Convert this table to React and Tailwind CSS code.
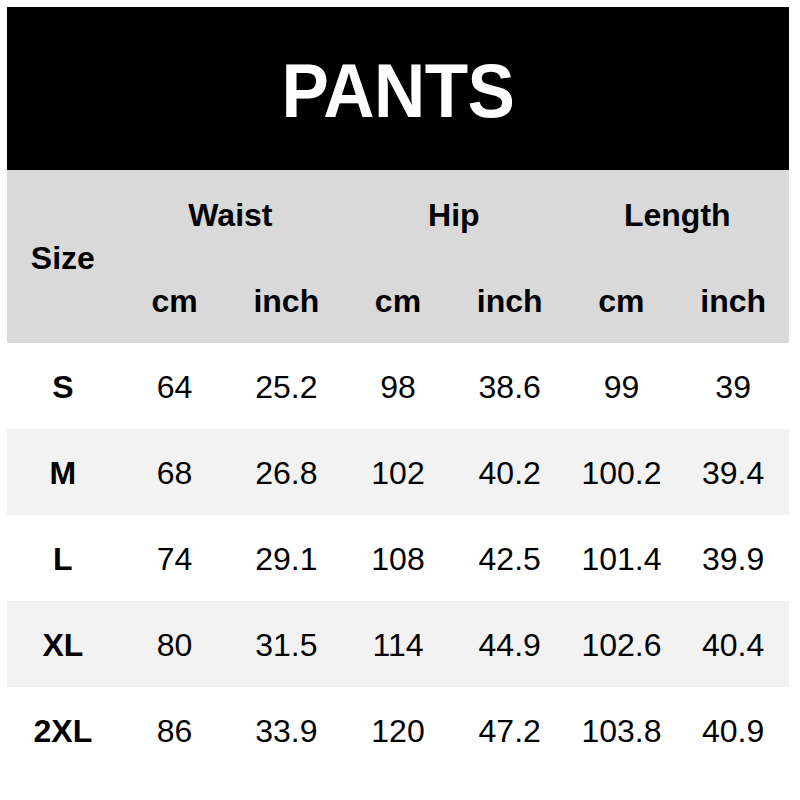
import React from 'react'

const rows = [
  ['S', '64', '25.2', '98', '38.6', '99', '39'],
  ['M', '68', '26.8', '102', '40.2', '100.2', '39.4'],
  ['L', '74', '29.1', '108', '42.5', '101.4', '39.9'],
  ['XL', '80', '31.5', '114', '44.9', '102.6', '40.4'],
  ['2XL', '86', '33.9', '120', '47.2', '103.8', '40.9'],
]

const Cell = ({ children, className = '' }) => (
  <div className={`flex items-center justify-center ${className}`}>{children}</div>
)

export default function App() {
  return (
    <div className="w-[800px] h-[800px] bg-white pt-[7px] pl-[7px] text-black font-['Liberation_Sans',Arial,sans-serif]">
      <div className="w-[782px]">
        <div className="h-[163px] bg-black flex items-center justify-center">
          <h1 className="text-white font-bold text-[71px] leading-none tracking-[-0.5px] pt-[4px] scale-y-[1.06]">PANTS</h1>
        </div>

        <div className="grid grid-cols-7 grid-rows-[86px_85px] h-[173px] bg-[#d9d9d9] font-bold text-[32px] leading-none pt-[2px]">
          <Cell className="row-span-2">Size</Cell>
          <Cell className="col-span-2">Waist</Cell>
          <Cell className="col-span-2">Hip</Cell>
          <Cell className="col-span-2">Length</Cell>
          <Cell>cm</Cell>
          <Cell>inch</Cell>
          <Cell>cm</Cell>
          <Cell>inch</Cell>
          <Cell>cm</Cell>
          <Cell>inch</Cell>
        </div>

        {rows.map((r, i) => (
          <div
            key={r[0]}
            className={`grid grid-cols-7 h-[86px] text-[32px] leading-none pt-[2px] ${i % 2 === 1 ? 'bg-[#f2f2f2]' : 'bg-white'}`}
          >
            {r.map((v, j) => (
              <Cell key={j} className={j === 0 ? 'font-bold' : ''}>{v}</Cell>
            ))}
          </div>
        ))}
      </div>
    </div>
  )
}
